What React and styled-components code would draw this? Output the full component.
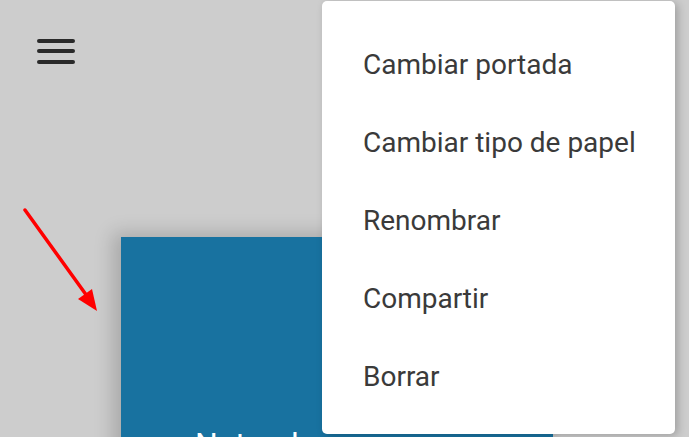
import React from 'react';
import styled, { createGlobalStyle } from 'styled-components';

const GlobalStyle = createGlobalStyle`
  html, body {
    margin: 0;
    padding: 0;
    background: #cdcdcd;
    font-family: Roboto, "Noto Sans", Arial, sans-serif;
  }
`;

const Screen = styled.div`
  position: relative;
  width: 689px;
  height: 437px;
  overflow: hidden;
  background: #cdcdcd;
`;

const Toolbar = styled.div`
  display: flex;
  align-items: center;
  height: 102px;
  padding-left: 37px;
`;

const MenuButton = styled.button`
  display: flex;
  flex-direction: column;
  justify-content: space-between;
  width: 38px;
  height: 25px;
  padding: 0;
  border: 0;
  background: transparent;

  span {
    display: block;
    height: 4px;
    border-radius: 2px;
    background: #2a2a2a;
  }
`;

const Shelf = styled.div`
  padding: 135px 0 0 121px;
`;

const Notebook = styled.div`
  width: 432px;
  height: 240px;
  background: #1872a0;
  box-shadow: -8px -4px 18px rgba(0, 0, 0, 0.18);
  padding: 188px 0 0 74px;
  box-sizing: border-box;
  color: #fff;
  font-size: 32px;
`;

const Arrow = styled.svg`
  position: absolute;
  left: 0;
  top: 190px;
`;

const Menu = styled.ul`
  position: absolute;
  top: 1px;
  left: 322px;
  width: 353px;
  height: 433px;
  margin: 0;
  padding: 24px 0 0;
  box-sizing: border-box;
  list-style: none;
  background: #fff;
  border-radius: 5px;
  box-shadow: 3px 2px 8px rgba(0, 0, 0, 0.22);
`;

const MenuItem = styled.li`
  display: flex;
  align-items: center;
  height: 78px;
  padding-left: 41px;
  font-size: 28px;
  color: #3a3a3a;
`;

const items = [
  'Cambiar portada',
  'Cambiar tipo de papel',
  'Renombrar',
  'Compartir',
  'Borrar',
];

export default function App() {
  return (
    <>
      <GlobalStyle />
      <Screen>
        <Toolbar>
          <MenuButton aria-label="Menú">
            <span />
            <span />
            <span />
          </MenuButton>
        </Toolbar>
        <Shelf>
          <Notebook>Naturaleza</Notebook>
        </Shelf>
        <Arrow width="110" height="130" viewBox="0 0 110 130">
          <line x1="25" y1="20" x2="87" y2="106" stroke="#ff0000" strokeWidth="3.5" strokeLinecap="round" />
          <polygon points="97,121 78,109 92,99" fill="#ff0000" />
        </Arrow>
        <Menu>
          {items.map((label) => (
            <MenuItem key={label}>{label}</MenuItem>
          ))}
        </Menu>
      </Screen>
    </>
  );
}
